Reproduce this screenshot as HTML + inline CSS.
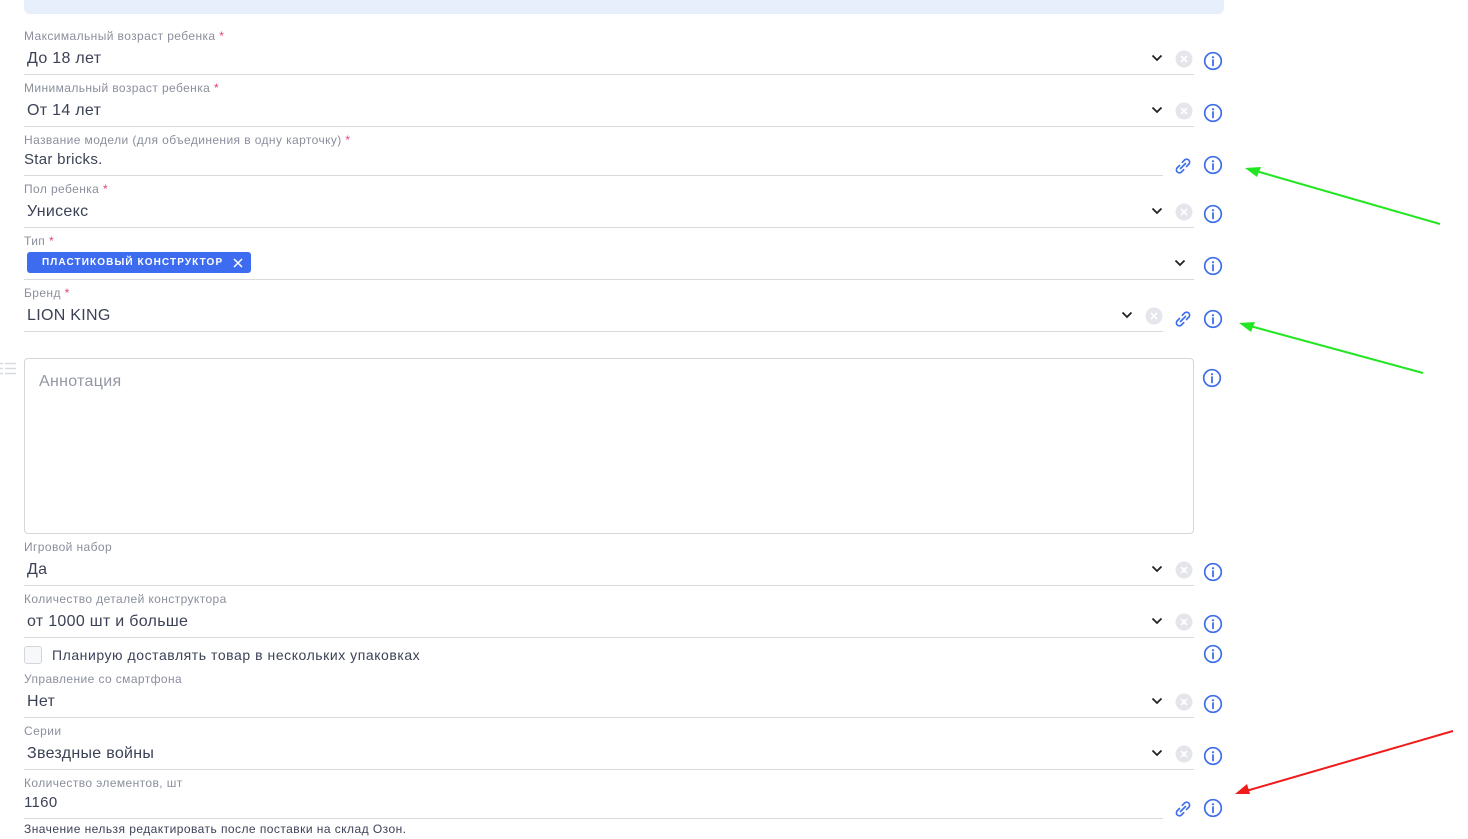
<!DOCTYPE html>
<html><head><meta charset="utf-8"><style>
*{margin:0;padding:0;box-sizing:border-box}
body{width:1468px;height:839px;background:#fff;position:relative;overflow:hidden;font-family:"Liberation Sans",Arial,sans-serif}
.a{position:absolute}
.lb{position:absolute;left:24px;font-size:12px;color:#8a8f9c;line-height:14px;white-space:nowrap;letter-spacing:0.4px}
.lb i{color:#e5417a;font-style:normal}
.v{position:absolute;left:27px;font-size:16px;color:#3c4256;line-height:20px;white-space:nowrap;letter-spacing:0.3px}
.ln{position:absolute;left:24px;height:1px;background:#d8dae0}
svg.ic{position:absolute}
</style></head><body>
<div class="a" style="left:24px;top:0;width:1200px;height:14px;background:#e8effc;border-radius:0 0 6px 6px"></div>

<svg width="0" height="0" style="position:absolute"><defs>
<g id="info"><circle cx="10" cy="10" r="8.3" fill="none" stroke="#3f6fe8" stroke-width="1.7"/><circle cx="10" cy="6.2" r="1.1" fill="#3f6fe8"/><path d="M10 9v5.5" stroke="#3f6fe8" stroke-width="1.8" stroke-linecap="round"/></g>
<g id="chev"><path d="M1.5 1.5L6 6L10.5 1.5" fill="none" stroke="#222" stroke-width="1.8"/></g>
<g id="clr"><circle cx="9" cy="9" r="8.5" fill="#e4e6eb"/><path d="M6 6l6 6M12 6l-6 6" stroke="#fff" stroke-width="1.7"/></g>
<g id="lnk"><path d="M7.5 12.5l5-5M6.5 9.5l-2.5 2.5a3 3 0 0 0 4.2 4.2l2.5-2.5M13.5 10.5l2.5-2.5a3 3 0 0 0-4.2-4.2l-2.5 2.5" fill="none" stroke="#3f6fe8" stroke-width="1.7" stroke-linecap="round"/></g>
</defs></svg>

<!-- 1 -->
<div class="lb" style="top:29px">Максимальный возраст ребенка <i>*</i></div>
<div class="v" style="top:49px">До 18 лет</div>
<div class="ln" style="top:74px;width:1170px"></div>
<svg class="ic" style="left:1151px;top:54px" width="12" height="8"><use href="#chev"/></svg>
<svg class="ic" style="left:1175px;top:50px" width="18" height="18"><use href="#clr"/></svg>
<svg class="ic" style="left:1203px;top:51px" width="20" height="20"><use href="#info"/></svg>
<!-- 2 -->
<div class="lb" style="top:81px">Минимальный возраст ребенка <i>*</i></div>
<div class="v" style="top:101px">От 14 лет</div>
<div class="ln" style="top:126px;width:1170px"></div>
<svg class="ic" style="left:1151px;top:106px" width="12" height="8"><use href="#chev"/></svg>
<svg class="ic" style="left:1175px;top:102px" width="18" height="18"><use href="#clr"/></svg>
<svg class="ic" style="left:1203px;top:103px" width="20" height="20"><use href="#info"/></svg>
<!-- 3 -->
<div class="lb" style="top:133px">Название модели (для объединения в одну карточку) <i>*</i></div>
<div class="v" style="top:150px;left:24px;font-size:15px">Star bricks.</div>
<div class="ln" style="top:175px;width:1139px"></div>
<svg class="ic" style="left:1173px;top:156px" width="20" height="20"><use href="#lnk"/></svg>
<svg class="ic" style="left:1203px;top:155px" width="20" height="20"><use href="#info"/></svg>
<!-- 4 -->
<div class="lb" style="top:182px">Пол ребенка <i>*</i></div>
<div class="v" style="top:202px">Унисекс</div>
<div class="ln" style="top:227px;width:1170px"></div>
<svg class="ic" style="left:1151px;top:207px" width="12" height="8"><use href="#chev"/></svg>
<svg class="ic" style="left:1175px;top:203px" width="18" height="18"><use href="#clr"/></svg>
<svg class="ic" style="left:1203px;top:204px" width="20" height="20"><use href="#info"/></svg>
<!-- 5 -->
<div class="lb" style="top:234px">Тип <i>*</i></div>
<div class="a" style="left:27px;top:252px;width:224px;height:21px;background:#3d6cf0;border-radius:3px;color:#fff;font-size:10px;font-weight:bold;letter-spacing:1.1px;line-height:21px;padding-left:15px">ПЛАСТИКОВЫЙ КОНСТРУКТОР</div>
<svg class="a" style="left:233px;top:258px" width="10" height="10"><path d="M1 1l8 8M9 1l-8 8" stroke="#fff" stroke-width="1.5"/></svg>
<div class="ln" style="top:279px;width:1170px"></div>
<svg class="ic" style="left:1174px;top:259px" width="12" height="8"><use href="#chev"/></svg>
<svg class="ic" style="left:1203px;top:256px" width="20" height="20"><use href="#info"/></svg>
<!-- 6 -->
<div class="lb" style="top:286px">Бренд <i>*</i></div>
<div class="v" style="top:306px">LION KING</div>
<div class="ln" style="top:331px;width:1139px"></div>
<svg class="ic" style="left:1121px;top:311px" width="12" height="8"><use href="#chev"/></svg>
<svg class="ic" style="left:1145px;top:307px" width="18" height="18"><use href="#clr"/></svg>
<svg class="ic" style="left:1173px;top:309px" width="20" height="20"><use href="#lnk"/></svg>
<svg class="ic" style="left:1203px;top:309px" width="20" height="20"><use href="#info"/></svg>
<!-- textarea -->
<svg class="a" style="left:0;top:362px" width="16" height="14"><path d="M0 1.5h3M5 1.5h11M0 6.5h3M5 6.5h11M0 11.5h3M5 11.5h11" stroke="#d8dae0" stroke-width="1.5"/></svg>
<div class="a" style="left:24px;top:358px;width:1170px;height:176px;border:1px solid #d4d6dc;border-radius:4px"></div>
<div class="v" style="left:39px;top:372px;color:#9397a3">Аннотация</div>
<svg class="ic" style="left:1202px;top:368px" width="20" height="20"><use href="#info"/></svg>
<!-- 7 -->
<div class="lb" style="top:540px">Игровой набор</div>
<div class="v" style="top:560px">Да</div>
<div class="ln" style="top:585px;width:1170px"></div>
<svg class="ic" style="left:1151px;top:565px" width="12" height="8"><use href="#chev"/></svg>
<svg class="ic" style="left:1175px;top:561px" width="18" height="18"><use href="#clr"/></svg>
<svg class="ic" style="left:1203px;top:562px" width="20" height="20"><use href="#info"/></svg>
<!-- 8 -->
<div class="lb" style="top:592px">Количество деталей конструктора</div>
<div class="v" style="top:612px">от 1000 шт и больше</div>
<div class="ln" style="top:637px;width:1170px"></div>
<svg class="ic" style="left:1151px;top:617px" width="12" height="8"><use href="#chev"/></svg>
<svg class="ic" style="left:1175px;top:613px" width="18" height="18"><use href="#clr"/></svg>
<svg class="ic" style="left:1203px;top:614px" width="20" height="20"><use href="#info"/></svg>
<!-- checkbox -->
<div class="a" style="left:24px;top:646px;width:18px;height:18px;border:1px solid #d4d6dc;border-radius:3px;background:#f7f8fa"></div>
<div class="v" style="left:52px;top:645px;font-size:14px;color:#3c4256;letter-spacing:0.55px">Планирую доставлять товар в нескольких упаковках</div>
<svg class="ic" style="left:1203px;top:644px" width="20" height="20"><use href="#info"/></svg>
<!-- 9 -->
<div class="lb" style="top:672px">Управление со смартфона</div>
<div class="v" style="top:692px">Нет</div>
<div class="ln" style="top:717px;width:1170px"></div>
<svg class="ic" style="left:1151px;top:697px" width="12" height="8"><use href="#chev"/></svg>
<svg class="ic" style="left:1175px;top:693px" width="18" height="18"><use href="#clr"/></svg>
<svg class="ic" style="left:1203px;top:694px" width="20" height="20"><use href="#info"/></svg>
<!-- 10 -->
<div class="lb" style="top:724px">Серии</div>
<div class="v" style="top:744px">Звездные войны</div>
<div class="ln" style="top:769px;width:1170px"></div>
<svg class="ic" style="left:1151px;top:749px" width="12" height="8"><use href="#chev"/></svg>
<svg class="ic" style="left:1175px;top:745px" width="18" height="18"><use href="#clr"/></svg>
<svg class="ic" style="left:1203px;top:746px" width="20" height="20"><use href="#info"/></svg>
<!-- 11 -->
<div class="lb" style="top:776px">Количество элементов, шт</div>
<div class="v" style="top:793px;left:24px;font-size:15px">1160</div>
<div class="ln" style="top:818px;width:1139px"></div>
<svg class="ic" style="left:1173px;top:799px" width="20" height="20"><use href="#lnk"/></svg>
<svg class="ic" style="left:1203px;top:798px" width="20" height="20"><use href="#info"/></svg>
<div class="lb" style="top:822px;color:#3c4256;letter-spacing:0.45px">Значение нельзя редактировать после поставки на склад Озон.</div>

<!-- arrows -->
<svg class="a" style="left:0;top:0" width="1468" height="839">
<line x1="1440" y1="224" x2="1256" y2="171" stroke="#22e622" stroke-width="2"/>
<path d="M1245 168l16-1-4 10z" fill="#22e622"/>
<line x1="1423" y1="373" x2="1250" y2="326" stroke="#22e622" stroke-width="2"/>
<path d="M1239 323l16-1-4 10z" fill="#22e622"/>
<line x1="1453" y1="731" x2="1246" y2="791" stroke="#f01c1c" stroke-width="2"/>
<path d="M1235 794l12-10 3 10z" fill="#f01c1c"/>
</svg>
</body></html>
